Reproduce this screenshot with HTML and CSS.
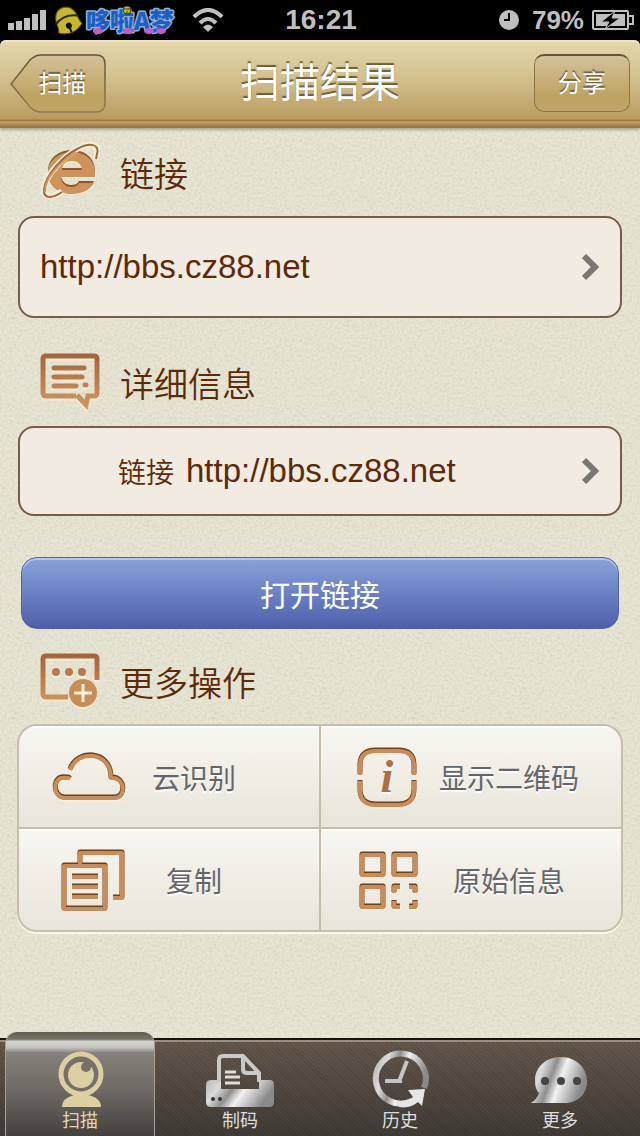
FILE: index.html
```html
<!DOCTYPE html>
<html lang="zh-CN">
<head>
    <meta charset="UTF-8">
    <meta name="viewport" content="width=device-width, initial-scale=1">
    <title>扫描结果</title>
    <link rel="stylesheet" href="styles.css">
</head>
<body>
    <!-- shared gradients -->
    <svg class="defs" width="0" height="0" aria-hidden="true">
        <defs>
            <linearGradient id="copper" x1="0" y1="0" x2="0" y2="60" gradientUnits="userSpaceOnUse">
                <stop offset="0" stop-color="#a2603c"/>
                <stop offset="1" stop-color="#d69c63"/>
            </linearGradient>
            <linearGradient id="metal" x1="0" y1="0" x2="1" y2="0.3">
                <stop offset="0" stop-color="#b5b5b5"/>
                <stop offset="0.25" stop-color="#dcdcdc"/>
                <stop offset="0.45" stop-color="#8f8f8f"/>
                <stop offset="0.62" stop-color="#f2f2f2"/>
                <stop offset="1" stop-color="#8a8a8a"/>
            </linearGradient>
        </defs>
    </svg>

    <div class="top">
        <!-- status bar -->
        <div class="status">
            <div class="status-side">
                <svg class="signal" width="38" height="20" viewBox="0 0 38 20" fill="#bfbfbf">
                    <rect x="0" y="13" width="6" height="7"/>
                    <rect x="8" y="11" width="6" height="9"/>
                    <rect x="16" y="8" width="6" height="12"/>
                    <rect x="24" y="4" width="6" height="16"/>
                    <rect x="32" y="0" width="6" height="20"/>
                </svg>
                <svg class="carrier" width="126" height="34" viewBox="0 0 126 34">
                    <g transform="rotate(-22 15 18)">
                        <path d="M3 26C5 22 4 17 5 13C7 6 11 4 15 4S24 6 26 13C27 17 26 22 28 26Q15 35 3 26Z" fill="#c8b82c" stroke="#5d5510"/>
                        <path d="M3 17Q15 10 27 17" fill="none" stroke="#2a2608" stroke-width="2"/>
                        <circle cx="15" cy="23" r="3" fill="#111"/>
                        <path d="M15 24V30" stroke="#111" stroke-width="2"/>
                    </g>
                    <text class="carrier-name" x="34" y="27">哆啦A梦</text>
                    <g fill="#c45bc9">
                        <ellipse cx="46" cy="28" rx="5" ry="3"/>
                        <ellipse cx="76" cy="28" rx="5" ry="3"/>
                        <ellipse cx="97" cy="28" rx="5" ry="3"/>
                        <ellipse cx="109" cy="28" rx="5" ry="3"/>
                    </g>
                    <circle cx="75" cy="7" r="4" fill="#c8b82c" stroke="#3b3b1a"/>
                    <path d="M71 6H79M75 8V11" stroke="#3b3b1a"/>
                </svg>
                <svg class="wifi" width="32" height="24" viewBox="0 0 32 24" fill="none" stroke="#bfbfbf" stroke-width="4">
                    <path d="M2 9Q16 -5 30 9"/>
                    <path d="M8 15Q16 7 24 15"/>
                    <path d="M16 24L11 19Q16 14 21 19Z" fill="#bfbfbf" stroke="none"/>
                </svg>
            </div>
            <time class="clock">16:21</time>
            <div class="status-side status-right">
                <svg width="20" height="20" viewBox="0 0 20 20">
                    <circle cx="10" cy="10" r="10" fill="#bfbfbf"/>
                    <path d="M10 3V10H5" fill="none" stroke="#000" stroke-width="2"/>
                </svg>
                <span class="percent">79%</span>
                <svg width="42" height="20" viewBox="0 0 42 20">
                    <rect x="1" y="1" width="35" height="18" rx="1" fill="none" stroke="#bfbfbf" stroke-width="2"/>
                    <rect x="4" y="4" width="29" height="12" fill="#bfbfbf"/>
                    <path d="M37 6H41V14H37" fill="none" stroke="#bfbfbf" stroke-width="2"/>
                    <path d="M23 1L9 12H17L13 19L28 8H20Z" fill="#000" stroke="#bfbfbf"/>
                </svg>
            </div>
        </div>

        <!-- title bar -->
        <header class="navbar">
            <button class="nav-btn back" type="button">
                <svg class="back-shape" width="97" height="60" viewBox="0 0 97 60">
                    <defs>
                        <linearGradient id="backFill" x1="0" y1="0" x2="0" y2="1">
                            <stop offset="0" stop-color="#d3c19a"/>
                            <stop offset="0.75" stop-color="#bda260"/>
                            <stop offset="1" stop-color="#c0a56c"/>
                        </linearGradient>
                        <linearGradient id="backEdge" x1="0" y1="0" x2="0" y2="1">
                            <stop offset="0" stop-color="#62543a"/>
                            <stop offset="1" stop-color="#94794a"/>
                        </linearGradient>
                    </defs>
                    <path d="M1 30L20 6Q25 1 31 1H86Q95 1 95 10V49Q95 58 86 58H31Q25 58 20 53Z" fill="url(#backFill)" stroke="url(#backEdge)" stroke-width="1.5"/>
                </svg>
                <span>扫描</span>
            </button>
            <h1>扫描结果</h1>
            <button class="nav-btn share" type="button"><span>分享</span></button>
        </header>
    </div>

    <main>
        <h2 class="heading">
            <svg width="60" height="60" viewBox="0 0 60 60">
                <defs><path id="globe" fill-rule="evenodd" d="M55 34V30C55 17 45 9 32 9C18 9 8 18 8 30C8 43 18 51 32 51C43 51 51 46 54 40H39C37 43 35 44 31 44C26 44 21 40 21 34ZM22 27C22 21 27 18 32 18S42 21 42 27Z"/></defs>
                <use href="#globe" fill="#fff3df" transform="translate(1 2)"/>
                <use href="#globe" fill="#8a5730" transform="translate(0 -1)"/>
                <use href="#globe" fill="#cf935a" transform="translate(0 1)"/>
                <path d="M22 49C12 57 3 56 4 46C6 33 22 16 37 7C50 0 60 2 57 12L56 17" fill="none" stroke="#f7ecd6" stroke-width="6"/>
                <path d="M22 50C12 57 3 57 4 47C6 33 22 15 37 7C50 0 60 2 57 12L56 17" fill="none" stroke="#9c6841" stroke-width="2"/>
                <path d="M5 50C4 36 20 20 36 10" fill="none" stroke="#cf935a" stroke-width="2"/>
            </svg>
            链接
        </h2>
        <a class="card card-main" href="http://bbs.cz88.net">
            <span class="url">http://bbs.cz88.net</span>
            <svg class="arrow" width="18" height="28" viewBox="0 0 18 28"><path d="M2 3L13 14L2 25" fill="none" stroke="#7a7772" stroke-width="6"/></svg>
        </a>

        <h2 class="heading heading-info">
            <svg width="60" height="60" viewBox="0 0 60 60">
                <g class="engraved" fill="none" stroke="url(#copper)" stroke-width="5">
                    <path d="M36 44H6Q3 44 3 41V7Q3 4 6 4H54Q57 4 57 7V41Q57 44 54 44H48L46 53L37 43"/>
                    <path d="M14 16H44M14 25H42M14 34H36M45 33H46" stroke-linecap="round"/>
                </g>
            </svg>
            详细信息
        </h2>
        <a class="card card-detail" href="http://bbs.cz88.net">
            <span class="card-label">链接</span>
            <span class="url">http://bbs.cz88.net</span>
            <svg class="arrow" width="18" height="28" viewBox="0 0 18 28"><path d="M2 3L13 14L2 25" fill="none" stroke="#7a7772" stroke-width="6"/></svg>
        </a>

        <button class="open-link" type="button">打开链接</button>

        <h2 class="heading heading-more">
            <svg width="60" height="60" viewBox="0 0 60 60">
                <g class="engraved">
                    <path d="M28 46H6Q3 46 3 43V8Q3 5 6 5H54Q57 5 57 8V29" fill="none" stroke="url(#copper)" stroke-width="5"/>
                    <g fill="#b37c50">
                        <circle cx="16" cy="21" r="4"/>
                        <circle cx="29" cy="21" r="4"/>
                        <circle cx="42" cy="21" r="4"/>
                    </g>
                    <circle cx="43" cy="42" r="14" fill="#c78e58"/>
                    <path d="M43 33V51M34 42H52" stroke="#fff3df" stroke-width="3"/>
                </g>
            </svg>
            更多操作
        </h2>

        <div class="actions">
            <button class="action" type="button">
                <svg width="80" height="64" viewBox="0 0 80 64">
                    <defs><path id="cloud" d="M19 24C26 3 60 5 60 32C75 31 75 52 64 52H14C1 52 1 30 14 32Q17 31 19 33"/></defs>
                    <use href="#cloud" class="cut-light"/><use href="#cloud" class="cut-dark"/><use href="#cloud" class="cut"/>
                </svg>
                <span>云识别</span>
            </button>
            <button class="action action-right" type="button">
                <svg width="80" height="64" viewBox="0 0 80 64">
                    <defs><path id="info" d="M13 29V20Q13 5 29 5H51Q67 5 67 20V29M13 35V44Q13 59 29 59H51Q67 59 67 44V35"/></defs>
                    <use href="#info" class="cut-light"/><use href="#info" class="cut-dark"/><use href="#info" class="cut"/>
                    <text class="info-letter" x="40" y="47" text-anchor="middle">i</text>
                </svg>
                <span>显示二维码</span>
            </button>
            <button class="action" type="button">
                <svg width="80" height="64" viewBox="0 0 80 64">
                    <defs><path id="copy" d="M13 17H54V60H13ZM29 15V4H71V49H62M21 28H47M21 38H47M21 48H47"/></defs>
                    <use href="#copy" class="cut-light"/><use href="#copy" class="cut-dark"/><use href="#copy" class="cut"/>
                </svg>
                <span>复制</span>
            </button>
            <button class="action action-right" type="button">
                <svg width="80" height="64" viewBox="0 0 80 64">
                    <defs><path id="code" d="M15 6H36V26H15ZM47 6H68V26H47ZM15 38H36V58H15ZM53 38H47V44M62 38H68V44M47 52V58H53M68 52V58H62"/></defs>
                    <use href="#code" class="cut-light"/><use href="#code" class="cut-dark"/><use href="#code" class="cut"/>
                </svg>
                <span>原始信息</span>
            </button>
        </div>
    </main>

    <!-- bottom tabs -->
    <nav class="tabs">
        <a class="tab active" href="#scan">
            <svg width="70" height="58" viewBox="0 0 70 58">
                <path d="M17 57Q17 48 29 45H43Q56 48 56 57Z" fill="#dccfa4"/>
                <circle cx="36" cy="24" r="20" fill="#777068" stroke="#dccfa4" stroke-width="5"/>
                <circle cx="36" cy="25" r="13" fill="#dccfa4"/>
                <circle cx="41" cy="17" r="5" fill="#777068"/>
            </svg>
            <span>扫描</span>
        </a>
        <a class="tab" href="#make">
            <svg width="70" height="58" viewBox="0 0 70 58">
                <path d="M6 30H16V39H54V30H65Q69 30 69 35V52Q69 57 64 57H6Q1 57 1 52V35Q1 30 6 30Z" fill="url(#metal)"/>
                <path d="M14 32V10Q14 6 18 6H38L54 23V32M38 7V19Q38 23 42 23H53" fill="none" stroke="#c9c9c9" stroke-width="4"/>
                <path d="M20 22H31M20 27H35M20 33H35" stroke="#ddd" stroke-width="3"/>
                <circle cx="8" cy="49" r="2" fill="#333"/>
                <circle cx="15" cy="49" r="2" fill="#333"/>
            </svg>
            <span>制码</span>
        </a>
        <a class="tab" href="#history">
            <svg width="70" height="58" viewBox="0 0 70 58">
                <path d="M59 38A25 25 0 1 0 47 51" fill="none" stroke="url(#metal)" stroke-width="6"/>
                <path d="M43 40L60 39L57 56L53 52Q45 59 34 57V51Q43 51 48 47Z" fill="#e6e6e6"/>
                <path d="M42 11L35 29V31H20" fill="none" stroke="#c4c4c4" stroke-width="4"/>
            </svg>
            <span>历史</span>
        </a>
        <a class="tab" href="#more">
            <svg width="70" height="58" viewBox="0 0 70 58">
                <path d="M36 7C21 7 10 17 10 30Q10 40 14 43Q12 49 6 53H40C54 53 62 43 62 31C62 18 51 7 36 7Z" fill="url(#metal)"/>
                <circle cx="20" cy="31" r="4" fill="#474340"/>
                <circle cx="36" cy="31" r="4" fill="#474340"/>
                <circle cx="52" cy="31" r="4" fill="#474340"/>
            </svg>
            <span>更多</span>
        </a>
    </nav>
</body>
</html>
```
FILE: styles.css
```css
* {
    box-sizing: border-box;
}

body {
    margin: 0;
    min-height: 100vh;
    display: flex;
    flex-direction: column;
    font-family: "Liberation Sans", "Noto Sans CJK SC", sans-serif;
    color: #5c2a09;
    background-color: #e9e6d6;
    /* paper grain */
    background-image: url("data:image/svg+xml,%3Csvg xmlns='http://www.w3.org/2000/svg' width='200' height='200'%3E%3Cfilter id='n'%3E%3CfeTurbulence type='fractalNoise' baseFrequency='0.4' numOctaves='3' stitchTiles='stitch'/%3E%3CfeColorMatrix values='0 0 0 0 0.6 0 0 0 0 0.6 0 0 0 0 0.45 1 0 0 0 -0.34'/%3E%3C/filter%3E%3Crect width='200' height='200' filter='url(%23n)'/%3E%3C/svg%3E");
}

button {
    font-family: inherit;
    border: none;
    padding: 0;
    cursor: pointer;
}

a {
    color: inherit;
    text-decoration: none;
}

svg {
    display: block;
    flex: none;
}

.defs {
    position: absolute;
}

/* status bar */
.top {
    background: linear-gradient(#000 60px, transparent 60px);
}

.status {
    display: flex;
    align-items: center;
    height: 40px;
    padding: 0 6px 0 8px;
    color: #bfbfbf;
    font-size: 28px;
    font-weight: bold;
}

.status-side {
    flex: 1;
    display: flex;
    align-items: center;
}

.status-right {
    justify-content: flex-end;
    gap: 8px;
}

.percent {
    margin-left: 5px;
    font-weight: bold;
    font-size: 26px;
}

.carrier {
    margin-left: 6px;
}

.carrier-name {
    font-family: "Noto Sans CJK SC", sans-serif;
    font-size: 24px;
    font-weight: 900;
    fill: #1c5fc4;
    stroke: #8fb0d8;
    stroke-width: 3px;
    stroke-linejoin: round;
    paint-order: stroke;
}

.wifi {
    margin-left: 14px;
}

/* title bar */
.navbar {
    display: flex;
    align-items: center;
    justify-content: space-between;
    height: 88px;
    padding: 0 10px 2px;
    border-radius: 6px 6px 0 0;
    background: linear-gradient(#e5d8ad, #d2bf8d 45%, #b99b60 90%, #8e6c3a 91%, #c99f62 93%, #966d42);
    box-shadow: inset 0 2px 0 #efe5c3, 0 2px 3px rgba(90, 80, 50, 0.4);
}

.navbar h1 {
    margin: 0;
    font-size: 40px;
    font-weight: 400;
    line-height: 60px;
    color: #fff;
    text-shadow: 0 -2px 1px #6d5c39;
}

.nav-btn {
    display: grid;
    place-items: center;
    width: 96px;
    height: 58px;
    background: none;
    color: #fff;
    font-size: 24px;
    line-height: 36px;
    text-shadow: 0 -2px 1px #6d5c39;
}

.nav-btn > * {
    grid-area: 1 / 1;
}

.back span {
    padding-left: 8px;
}

.share {
    border: 1px solid #8f7545;
    border-top: 2px solid #62543a;
    border-radius: 10px;
    background: linear-gradient(#d3c19a, #bda260 75%, #c0a56c);
}

/* sections */
main {
    flex: 1;
    padding: 0 18px 40px;
}

.heading {
    display: flex;
    align-items: center;
    gap: 20px;
    height: 88px;
    margin: 0;
    padding-left: 22px;
    font-size: 34px;
    font-weight: 350;
}

.heading-info {
    margin-top: 20px;
}

.heading-more {
    margin-top: 8px;
}

.engraved {
    filter: drop-shadow(0 2px 0 #fbeed4);
}

.card {
    display: flex;
    align-items: center;
    padding: 0 20px;
    border: 2px solid #7b5a47;
    border-radius: 16px;
    background: #f1ebe1;
}

.card-main {
    height: 102px;
}

.card-detail {
    height: 90px;
    padding-left: 98px;
}

.card-label {
    margin-right: 12px;
    font-size: 28px;
    font-weight: 350;
}

.url {
    font-size: 33px;
}

.arrow {
    margin-left: auto;
}

.open-link {
    display: block;
    width: calc(100% - 6px);
    height: 72px;
    margin: 41px 3px 0;
    border: 1px solid #5560a0;
    border-radius: 16px;
    background: linear-gradient(#8ba3d9, #7088c8 40%, #5566b0 90%, #4f5ca8);
    box-shadow: inset 0 2px 0 #b6c6ee;
    color: #fff;
    font-size: 30px;
}

/* action grid */
.actions {
    display: grid;
    grid-template-columns: 1fr 1fr;
    gap: 2px;
    margin: -1px -1px 0;
    border: 2px solid #c5beaa;
    border-radius: 20px;
    background: #c5beaa;
    box-shadow: 0 2px 0 #fbf8ea;
    overflow: hidden;
}

.action {
    display: grid;
    grid-template-columns: 80px 106px;
    align-items: center;
    gap: 10px;
    height: 101px;
    padding-left: 32px;
    background: linear-gradient(#f8f6f1, #e8e5da);
    box-shadow: inset 0 2px 0 #fff;
    color: #66666a;
    font-size: 28px;
    text-shadow: 0 2px 0 #fff;
}

.action-right {
    grid-template-columns: 80px 144px;
    padding-left: 26px;
}

.cut,
.cut-dark,
.cut-light {
    fill: none;
    stroke-width: 5px;
    stroke-linejoin: round;
}

.cut {
    stroke: #c98d5b;
    stroke-width: 4px;
    transform: translate(0, 1px);
}

.cut-dark {
    stroke: #70401d;
}

.cut-light {
    stroke: #fff1dc;
    transform: translate(1px, 2px);
}

.info-letter {
    font-family: "Liberation Serif", serif;
    font-size: 46px;
    font-style: italic;
    font-weight: bold;
    fill: #ab7044;
}

/* bottom tabs */
.tabs {
    display: grid;
    grid-template-columns: repeat(4, 1fr);
    height: 98px;
    border-top: 2px solid #17130f;
    background: repeating-linear-gradient(45deg, rgba(0, 0, 0, 0.1) 0 1px, transparent 1px 3px), linear-gradient(#65584d, #403b37);
    box-shadow: inset 0 2px 0 #9b8d80;
}

.tab {
    display: flex;
    flex-direction: column;
    align-items: center;
    justify-content: flex-end;
    color: #dedede;
    font-size: 18px;
    line-height: 28px;
    padding-bottom: 1px;
}

.tab svg {
    margin-bottom: -1px;
}

.tab.active {
    margin: -8px 5px 0;
    border: solid #a5a199;
    border-width: 0 1px;
    border-radius: 12px 12px 0 0;
    background: linear-gradient(#5f5c52, #77746b 7%, #d4d3d0 9%, #c5c3c0 15%, #85807a 20%, #6f6a65 55%, #45413e);
    color: #e2d6ae;
}
```
